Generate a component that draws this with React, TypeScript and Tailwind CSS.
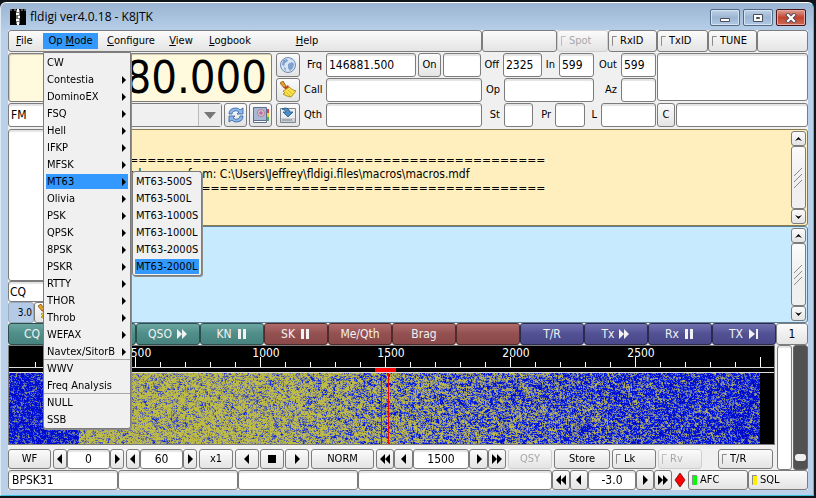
import { ReactNode, useEffect, useRef } from "react";
import clsx from "clsx";

const menuItems = [
    "CW", "Contestia", "DominoEX", "FSQ", "Hell", "IFKP", "MFSK", "MT63", "Olivia", "PSK", "QPSK",
    "8PSK", "PSKR", "RTTY", "THOR", "Throb", "WEFAX", "Navtex/SitorB", "WWV", "Freq Analysis", "NULL", "SSB",
];
const leafItems = ["CW", "WWV", "Freq Analysis", "NULL", "SSB"];
const subItems = ["MT63-500S", "MT63-500L", "MT63-1000S", "MT63-1000L", "MT63-2000S", "MT63-2000L"];

const face = "rounded-[3px] border border-[#7c7c7c] bg-linear-to-b from-[#fbfbfb] via-[#efefef] to-[#e4e4e4]";
const field = "min-w-0 rounded-[3px] border border-[#7c7c7c] bg-white shadow-[inset_0_2px_1px_#e4e4e4] outline-none";

const glyphs = {
    left: "M8 1v10L3 6z",
    right: "M4 1v10l5-5z",
    first: "M6 1v10L1 6zM11 1v10L6 6z",
    last: "M1 1v10l5-5zM6 1v10l5-5z",
    stop: "M2 2h8v8H2z",
    fast: "M1 1v10l5-5zM6 1v10l5-5z",
    pause: "M2 1h3v10H2zM7 1h3v10H7z",
    end: "M2 1v10l6-5zM9 1h2v10H9z",
};

type GlyphName = keyof typeof glyphs;

const Glyph = ({ name, className }: { name: GlyphName; className?: string }) => (
    <svg viewBox="0 0 12 12" className={clsx("size-3 shrink-0 fill-current", className)} aria-hidden="true">
        <path d={glyphs[name]} />
    </svg>
);

interface ButtonProps {
    children?: ReactNode;
    className?: string;
    label?: string;
    disabled?: boolean;
}

const Button = ({ children, className, label, disabled }: ButtonProps) => (
    <button
        type="button"
        aria-label={label}
        disabled={disabled}
        className={clsx(face, "flex shrink-0 items-center justify-center whitespace-nowrap", disabled && "border-[#cfcfcf] text-[#a8a8a8]", className)}
    >
        {children}
    </button>
);

interface LightButtonProps {
    text: string;
    className?: string;
    lamp?: string;
    disabled?: boolean;
}

const LightButton = ({ text, className, lamp, disabled }: LightButtonProps) => (
    <button
        type="button"
        disabled={disabled}
        className={clsx(face, "flex shrink-0 items-center gap-[3px] pl-[3px] whitespace-nowrap", disabled && "border-[#cfcfcf] text-[#a8a8a8]", className)}
    >
        <span className={clsx("h-[10px] w-[5px] rounded-[1px] border-t border-l border-[#8a8a8a]", lamp, disabled && "opacity-50")} />
        {text}
    </button>
);

const Field = ({ label, labelClass, className, value }: { label: string; labelClass: string; className: string; value?: string }) => (
    <label className="flex items-center">
        <span className={clsx("shrink-0 pr-1 text-right", labelClass)}>{label}</span>
        <input defaultValue={value} className={clsx(field, "h-6 px-[2px] text-[12px]", className)} />
    </label>
);

const Scrollbar = () => (
    <div className="flex w-[15px] shrink-0 flex-col">
        <Button label="Scroll up" className="h-[15px]">
            <svg viewBox="0 0 7 4" className="h-1 w-[7px]"><path d="M0 4L3.5 0 7 4 3.5 2.5z" /></svg>
        </Button>
        <div className={clsx(face, "flex flex-1 items-center justify-center from-[#f0f0f0] to-[#f0f0f0]")}>
            <svg viewBox="0 0 9 21" className="h-[21px] w-[9px] fill-none stroke-[#8a8a8a]">
                <path d="M0 9L8 1M0 15L8 7M0 21L8 13" />
            </svg>
        </div>
        <Button label="Scroll down" className="h-[15px]">
            <svg viewBox="0 0 7 4" className="h-1 w-[7px]"><path d="M0 0l3.5 4L7 0 3.5 1.5z" /></svg>
        </Button>
    </div>
);

const TitleBar = () => (
    <header className="flex h-[27px] items-center gap-1 pl-[2px]">
        <svg viewBox="0 0 16 16" className="size-4" aria-hidden="true">
            <path d="M0 0h16v16H0z" />
            <path d="M6 1h4v14H6z" fill="#777" />
            <path d="M7 0h2v3H7zM6 4h3v2H6zM8 7h2v2H8zM6 10h3v2H6zM7 13h2v3H7z" fill="#fff" />
            <path d="M0 1h2M4 1h2M11 1h2M14 1h2" stroke="#aaa" />
        </svg>
        <h1 className="flex-1 font-['Open_Sans',sans-serif] text-[12px]">fldigi ver4.0.18 - K8JTK</h1>
        <div className="flex gap-[3px] pt-[2px] pr-[2px]">
            <button type="button" aria-label="Minimize" className="flex h-[17px] w-[30px] items-center justify-center rounded-[2px] border border-[#536a85] bg-linear-to-b from-[#bfd2e7] via-[#9bb5d3] to-[#b1cae4] shadow-[inset_0_0_0_1px_#d5e3f2]">
                <svg viewBox="0 0 12 10" className="h-[10px] w-3"><path d="M1.5 5.5h9v3h-9z" fill="#fff" stroke="#4c4d5b" /></svg>
            </button>
            <button type="button" aria-label="Maximize" className="flex h-[17px] w-[30px] items-center justify-center rounded-[2px] border border-[#536a85] bg-linear-to-b from-[#bfd2e7] via-[#9bb5d3] to-[#b1cae4] shadow-[inset_0_0_0_1px_#d5e3f2]">
                <svg viewBox="0 0 12 10" className="h-[10px] w-3">
                    <path d="M1.5 1.5h9v7h-9z" fill="#fff" stroke="#4c4d5b" />
                    <path d="M4.5 4.5h3v1h-3z" fill="#9bb5d3" stroke="#4c4d5b" />
                </svg>
            </button>
            <button type="button" aria-label="Close" className="flex h-[17px] w-[30px] items-center justify-center rounded-[2px] border border-[#4b1519] bg-linear-to-b from-[#dd9d92] via-[#c2432e] to-[#cc6a55] shadow-[inset_0_0_0_1px_#e2aaa0]">
                <svg viewBox="0 0 12 10" className="h-[10px] w-3">
                    <path d="M3 2l6 6M9 2L3 8" stroke="#514a58" strokeWidth="4" strokeLinecap="square" />
                    <path d="M3 2l6 6M9 2L3 8" stroke="#fff" strokeWidth="2.2" strokeLinecap="square" />
                </svg>
            </button>
        </div>
    </header>
);

const OpModeMenu = () => (
    <div role="menu" className="absolute top-[19px] left-0 z-10 w-[88px] rounded-b-[3px] border border-[#7c7c7c] bg-[#f0f0f0] pt-px shadow-[1px_1px_0_#8c8c8c]">
        {menuItems.map((item) => (
            <div
                key={item}
                className={clsx("relative px-[2px]", (item === "WWV" || item === "NULL") && "shadow-[0_-1px_0_#a8a8a8]")}
            >
                <button
                    type="button"
                    role="menuitem"
                    className={clsx("flex h-[17px] w-full items-center justify-between border-y border-transparent bg-clip-padding pr-[2px] pl-px whitespace-nowrap", item === "MT63" && "bg-[#3399ff]")}
                >
                    {item}
                    {!leafItems.includes(item) && (
                        <svg viewBox="0 0 4 8" className="h-2 w-1"><path d="M0 0v8l4-4z" /></svg>
                    )}
                </button>
                {item === "MT63" && (
                    <div role="menu" className="absolute -top-[2px] left-[88px] w-[70px] rounded-[3px] border border-[#7c7c7c] bg-[#f0f0f0] px-[2px] pt-px shadow-[1px_1px_0_#8c8c8c]">
                        {subItems.map((sub) => (
                            <button
                                key={sub}
                                type="button"
                                role="menuitem"
                                className={clsx("flex h-[17px] w-full items-center border-y border-transparent bg-clip-padding pl-px whitespace-nowrap", sub === "MT63-2000L" && "bg-[#3399ff]")}
                            >
                                {sub}
                            </button>
                        ))}
                    </div>
                )}
            </div>
        ))}
    </div>
);

const MenuBar = () => (
    <div className="flex h-[22px]">
        <nav className={clsx(face, "flex flex-1 items-center pl-[7px]")}>
            <button type="button" className="w-[27px] text-left"><u>F</u>ile</button>
            <div className="relative">
                <button type="button" className="h-4 w-[55px] bg-[#3399ff] whitespace-nowrap">Op <u>M</u>ode</button>
                <OpModeMenu />
            </div>
            <button type="button" className="w-16 pl-[9px] text-left"><u>C</u>onfigure</button>
            <button type="button" className="w-[38px] text-center"><u>V</u>iew</button>
            <button type="button" className="w-[60px] text-center"><u>L</u>ogbook</button>
            <button type="button" className="ml-6 w-[46px] text-center"><u>H</u>elp</button>
        </nav>
        <Button label="Status" className="w-[75px]" />
        <LightButton text="Spot" disabled className="w-[51px]" />
        <LightButton text="RxID" className="w-[49px]" />
        <LightButton text="TxID" className="w-[51px]" />
        <LightButton text="TUNE" className="w-[49px]" />
        <Button label="Alert" className="w-[51px]" />
    </div>
);

const GlobeIcon = () => (
    <svg viewBox="0 0 18 18" className="size-[18px]">
        <circle cx="9" cy="9" r="7.5" fill="#d7e4f3" stroke="#6c8ab5" />
        <path d="M4 4l4-1 1 2-3 2-1 3-2-1zM9 8l4-2 2 2-1 4-3 3-2-3z" fill="#7da0cd" />
        <path d="M5 11l2 1v3l-2-2zM11 2l2 1-1 1z" fill="#8fb0d8" />
    </svg>
);

const BroomIcon = () => (
    <svg viewBox="0 0 18 18" className="size-[18px]">
        <path d="M1 2l3-2 3 5-2 2z" fill="#e3a02a" stroke="#8a5512" strokeWidth=".8" />
        <path d="M5 7l4-3 1 2-3 3z" fill="#c33f1e" />
        <path d="M6 9l4-3q3 3 7 4l-5 6q-6-1-8-3l2-1-2-2z" fill="#f8e04a" stroke="#a98a16" strokeWidth=".9" />
        <path d="M9 9l4 4M7 11l4 4" stroke="#d4b122" strokeWidth=".8" />
    </svg>
);

const SaveIcon = () => (
    <svg viewBox="0 0 18 18" className="size-[18px]">
        <path d="M1.5 2.5h15v14h-15z" fill="#eceff2" stroke="#7a8590" />
        <path d="M2 12h14v4H2z" fill="#c9ced3" />
        <path d="M4 13v2M6 13v2M8 13v2M10 13v2M12 13v2" stroke="#888" />
        <path d="M3 3q6-3 8 3h3l-5 5-5-5h3q0-2-4-3z" fill="#4c8cc4" stroke="#1f5487" strokeWidth=".8" />
    </svg>
);

const SyncIcon = () => (
    <svg viewBox="0 0 18 18" className="size-[18px]" fill="#8fb8ea" stroke="#2c5e9e" strokeWidth=".8">
        <path d="M2 8q0-6 7-6 3 0 4 2l3-2v6h-6l2-2q-2-2-5-1-2 1-2 3z" />
        <path d="M16 10q0 6-7 6-3 0-4-2l-3 2v-6h6l-2 2q2 2 5 1 2-1 2-3z" />
    </svg>
);

const BookIcon = () => (
    <svg viewBox="0 0 18 18" className="size-[18px]">
        <path d="M14 3h3v4h-3z" fill="#e04040" />
        <path d="M14 7h3v4h-3z" fill="#f0d030" />
        <path d="M14 11h3v4h-3z" fill="#4db04d" />
        <path d="M1.5 1.5h13v14h-13z" fill="#a9b8d2" stroke="#5e6f8d" />
        <path d="M1.5 14.5h13v2h-13z" fill="#fff" stroke="#5e6f8d" />
        <circle cx="9" cy="7" r="3.5" fill="#d9c4d8" stroke="#b08098" />
        <circle cx="9" cy="7" r="1.2" fill="none" stroke="#b04070" />
    </svg>
);

const RigPanel = () => (
    <section className="flex gap-1 pt-px pb-[2px]">
        <div className="flex w-[264px] shrink-0 flex-col gap-px">
            <div className="flex h-[49px] items-center justify-end overflow-hidden rounded-[3px] border border-[#7c7c7c] bg-[#fffade] pr-1 text-[45px] leading-[47px] shadow-[inset_1px_1px_1px_#cfcbb4]">
                880.000
            </div>
            <div className="flex h-6 gap-[2px]">
                <div className={clsx(field, "flex flex-1 items-center")}>
                    <input aria-label="Mode" defaultValue="FM" className="w-9 pl-[2px] text-[12px] outline-none" />
                    <span className="h-full flex-1 bg-[#f0f0f0]" />
                    <button type="button" aria-label="Choose bandwidth" className="flex h-full w-[23px] items-center justify-center border-l border-[#bbb] bg-[#ececec]">
                        <svg viewBox="0 0 12 7" className="h-[7px] w-3"><path d="M0 0h12L6 7z" fill="#777" /></svg>
                    </button>
                </div>
                <Button label="Refresh" className="w-[23px]"><SyncIcon /></Button>
                <Button label="Logbook entry" className="w-[23px]"><BookIcon /></Button>
            </div>
        </div>
        <div className="flex w-6 shrink-0 flex-col gap-px">
            <Button label="Web lookup" className="h-6"><GlobeIcon /></Button>
            <Button label="Clear" className="h-6"><BroomIcon /></Button>
            <Button label="Save" className="h-6"><SaveIcon /></Button>
        </div>
        <div className="flex w-[352px] shrink-0 flex-col gap-px">
            <div className="flex h-6">
                <Field label="Frq" labelClass="w-[22px]" className="w-[90px]" value="146881.500" />
                <Button className="mx-[2px] w-[23px]">On</Button>
                <input aria-label="Time on" className={clsx(field, "w-[39px]")} />
                <Field label="Off" labelClass="w-[22px]" className="w-[39px]" value="2325" />
                <Field label="In" labelClass="w-[17px]" className="w-[35px]" value="599" />
                <Field label="Out" labelClass="w-[27px]" className="w-[35px]" value="599" />
            </div>
            <div className="flex h-6">
                <Field label="Call" labelClass="w-[22px]" className="w-[156px]" />
                <Field label="Op" labelClass="w-[22px]" className="w-[90px]" />
                <Field label="Az" labelClass="w-[27px]" className="w-[35px]" />
            </div>
            <div className="flex h-6">
                <Field label="Qth" labelClass="w-[22px]" className="w-[156px]" />
                <Field label="St" labelClass="w-[22px]" className="w-[29px]" />
                <Field label="Pr" labelClass="w-[22px]" className="w-[30px]" />
                <Field label="L" labelClass="w-[16px]" className="w-[55px]" />
            </div>
        </div>
        <div className="-ml-[3px] flex min-w-0 flex-1 flex-col gap-[2px]">
            <textarea aria-label="Notes" className={clsx(field, "h-12 w-full resize-none")} />
            <div className="flex h-6 gap-px">
                <Button className="w-[18px]">C</Button>
                <input aria-label="Country" className={clsx(field, "flex-1")} />
            </div>
        </div>
    </section>
);

const TextPanes = () => (
    <section className="flex h-[194px]">
        <div className="flex w-[88px] shrink-0 flex-col">
            <div className={clsx(field, "h-[152px]")} />
            <input aria-label="Search" defaultValue="CQ" className={clsx(field, "h-[21px] px-px text-[12px]")} />
            <div className="flex h-[21px]">
                <span className="flex w-[26px] items-center justify-end rounded-[3px] border border-[#9ab] bg-[#b4cbe8] pr-px text-[10px]">3.0</span>
                <Button label="Clear browser" className="w-[23px]"><BroomIcon /></Button>
            </div>
        </div>
        <div className="flex min-w-0 flex-1 flex-col">
            <div className="flex h-[97px] rounded-[3px] border border-[#8a7a50] bg-[#ffefbf] p-px">
                <pre className="min-w-0 flex-1 overflow-hidden pt-[22px] pl-1 font-[DejaVu_Sans_Condensed,sans-serif] text-[12px] leading-[14px]">
                    {"=".repeat(49) + "\nLoaded macros from: C:\\Users\\Jeffrey\\fldigi.files\\macros\\macros.mdf\n" + "=".repeat(49)}
                </pre>
                <Scrollbar />
            </div>
            <div className="flex h-[97px] rounded-[3px] border border-[#5f7f98] bg-[#c8eaff] p-px">
                <textarea aria-label="Transmit text" className="flex-1 resize-none outline-none" />
                <Scrollbar />
            </div>
        </div>
    </section>
);

const teal = "bg-linear-to-b from-[#6aa5a1] via-[#4f8d89] to-[#478480] border-[#2b4f4d]";
const maroon = "bg-linear-to-b from-[#b06b6b] via-[#935050] to-[#8b4949] border-[#4f2b2b]";
const navy = "bg-linear-to-b from-[#7070b0] via-[#505093] to-[#49498b] border-[#2b2b4f]";

const macros: { text: string; tone: string; glyph?: GlyphName }[] = [
    { text: "CQ", tone: teal, glyph: "fast" },
    { text: "", tone: teal },
    { text: "QSO", tone: teal, glyph: "fast" },
    { text: "KN", tone: teal, glyph: "pause" },
    { text: "SK", tone: maroon, glyph: "pause" },
    { text: "Me/Qth", tone: maroon },
    { text: "Brag", tone: maroon },
    { text: "", tone: maroon },
    { text: "T/R", tone: navy },
    { text: "Tx", tone: navy, glyph: "fast" },
    { text: "Rx", tone: navy, glyph: "pause" },
    { text: "TX", tone: navy, glyph: "end" },
];

const MacroBar = () => (
    <div className="flex h-[22px]">
        {macros.map((macro, i) => (
            <button
                key={i}
                type="button"
                aria-label={macro.text || "Empty macro"}
                className={clsx("flex min-w-0 flex-1 items-center justify-center gap-1 rounded-[3px] border text-[12px] text-[#f2f2f2]", macro.tone)}
            >
                {macro.text}
                {macro.glyph && <Glyph name={macro.glyph} />}
            </button>
        ))}
        <Button className="w-8 text-[12px]">1</Button>
    </div>
);

// signal level over the passband, 0 is noise floor and 1 is full
const level = (x: number, y: number) => {
    if (x < 50) return 0.14;
    const edge = 76 - y / 10;
    if (x < edge) return 0.2;
    if (x < 240) return 0.82;
    if (x < 400) return 0.82 - ((x - 240) / 160) * 0.24;
    return Math.max(0.2, 0.58 - ((x - 400) / 350) * 0.36);
};

const palette = [[0, 10, 200], [0, 28, 240], [75, 90, 185], [125, 130, 135], [175, 172, 90], [192, 190, 66]];

const Waterfall = () => {
    const ref = useRef<HTMLCanvasElement>(null);

    useEffect(() => {
        const canvas = ref.current;
        const ctx = canvas?.getContext("2d");
        if (!canvas || !ctx) return;
        const { width, height } = canvas;
        const image = ctx.createImageData(width, height);
        let seed = 7321;
        const random = () => {
            seed = (seed * 1664525 + 1013904223) >>> 0;
            return seed / 4294967296;
        };
        const above = Array.from({ length: width }, random);
        for (let y = 0; y < height; y++) {
            let previous = random();
            for (let x = 0; x < width; x++) {
                // neighbours share part of their noise so the grain spans about two pixels
                const next = random() * 0.5 + previous * 0.3 + above[x] * 0.2;
                previous = next;
                above[x] = next;
                const v = Math.min(0.999, Math.max(0, level(x, y) + (next - 0.5) * 1.7)) * (palette.length - 1);
                const low = palette[Math.floor(v)];
                const high = palette[Math.floor(v) + 1];
                const k = v - Math.floor(v);
                const at = (y * width + x) * 4;
                for (let c = 0; c < 3; c++) image.data[at + c] = low[c] + (high[c] - low[c]) * k;
                image.data[at + 3] = 255;
            }
        }
        ctx.putImageData(image, 0, 0);
        ctx.fillStyle = "#ff0000";
        ctx.fillRect(372, 0, 1, height);
        ctx.fillRect(379, 0, 1, height);
    }, []);

    return <canvas ref={ref} width={751} height={71} className="h-[71px] w-full min-w-0 flex-1 [image-rendering:pixelated]" />;
};

const Scale = () => (
    <svg className="block h-[27px] w-full text-[12px]" fill="#fff">
        {Array.from({ length: 30 }, (_, i) => i + 1).map((i) => (
            <rect key={i} x={i * 25 + 1} y={i % 5 ? 16 : 11} width="1" height={i % 5 ? 5 : 10} />
        ))}
        {[500, 1000, 1500, 2000, 2500].map((hz) => (
            <text key={hz} x={hz / 4 + 7} y="11" textAnchor="middle">{hz}</text>
        ))}
        <rect y="21" width="100%" height="1" fill="#ddd" />
        <rect y="26" width="100%" height="1" fill="#ddd" />
        <rect x="366" y="22" width="21" height="4" fill="#f00" />
    </svg>
);

const ControlRow = () => (
    <div className="flex h-5 gap-[2px]">
        <Button className="w-[43px]">WF</Button>
        <div className="flex">
            <Button label="Lower level" className="w-[14px]"><Glyph name="left" /></Button>
            <input aria-label="Level" defaultValue="0" className={clsx(field, "w-[43px] text-center text-[12px]")} />
            <Button label="Raise level" className="w-[14px]"><Glyph name="right" /></Button>
        </div>
        <div className="flex">
            <Button label="Lower range" className="w-[14px]"><Glyph name="left" /></Button>
            <input aria-label="Range" defaultValue="60" className={clsx(field, "w-[43px] text-center text-[12px]")} />
            <Button label="Raise range" className="w-[14px]"><Glyph name="right" /></Button>
        </div>
        <Button className="w-[34px]">x1</Button>
        <div className="flex gap-px">
            <Button label="Move left" className="w-6"><Glyph name="left" /></Button>
            <Button label="Center" className="w-6"><Glyph name="stop" /></Button>
            <Button label="Move right" className="w-6"><Glyph name="right" /></Button>
        </div>
        <Button className="w-[63px]">NORM</Button>
        <div className="flex">
            <Button label="Fast down" className="w-[18px]"><Glyph name="first" /></Button>
            <Button label="Down" className="w-[19px]"><Glyph name="left" /></Button>
            <input aria-label="Carrier" defaultValue="1500" className={clsx(field, "w-[56px] text-center text-[12px]")} />
            <Button label="Up" className="w-[19px]"><Glyph name="right" /></Button>
            <Button label="Fast up" className="w-[18px]"><Glyph name="last" /></Button>
        </div>
        <Button disabled className="w-[44px]">QSY</Button>
        <Button className="w-[56px]">Store</Button>
        <LightButton text="Lk" className="w-[44px]" />
        <LightButton text="Rv" disabled className="w-[44px]" />
        <LightButton text="T/R" className="mr-[2px] ml-auto w-[55px]" />
    </div>
);

const StatusRow = () => (
    <footer className="flex h-5">
        <div className={clsx(field, "flex w-[110px] items-center pl-[3px] text-[12px]")}>BPSK31</div>
        <div className={clsx(field, "w-[120px]")} />
        <div className={clsx(field, "w-[120px]")} />
        <div className={clsx(field, "flex-1")} />
        <Button label="Fast lower squelch" className="w-[18px]"><Glyph name="first" /></Button>
        <Button label="Lower squelch" className="w-[18px]"><Glyph name="left" /></Button>
        <input aria-label="Squelch" defaultValue="-3.0" className={clsx(field, "w-[48px] text-center text-[12px]")} />
        <Button label="Raise squelch" className="w-[18px]"><Glyph name="right" /></Button>
        <Button label="Fast raise squelch" className="w-[18px]"><Glyph name="last" /></Button>
        <svg viewBox="0 0 16 20" className="h-5 w-4 shrink-0"><path d="M8 3l5 7-5 7-5-7z" fill="#f00" stroke="#500" strokeWidth=".7" /></svg>
        <LightButton text="AFC" lamp="bg-[#00ff00]" className="w-[60px]" />
        <LightButton text="SQL" lamp="bg-[#ffee00]" className="w-[60px]" />
    </footer>
);

export default function App() {
    return (
        <div className="bg-[#10151c] pt-[2px] pr-[2px] pb-[3px] font-[DejaVu_Sans_Condensed,sans-serif] text-[11px] leading-[14px] text-black">
            <div className="rounded-t-[6px] border border-[#35c4dc] border-t-white border-l-[#dfeaf5] bg-linear-to-b from-[#9ab4d2] via-[#b9d1ea] via-[30px] to-[#b9d1ea] pr-[5px] pb-[5px] pl-[7px]">
                <TitleBar />
                <main className="bg-[#f0f0f0]">
                    <MenuBar />
                    <RigPanel />
                    <TextPanes />
                    <MacroBar />
                    <div className="flex">
                        <div className="flex min-w-0 flex-1 flex-col gap-1 pb-px">
                            <div className="border border-[#7c7c7c] bg-black">
                                <Scale />
                                <div className="flex">
                                    <Waterfall />
                                    <span className="w-[14px] shrink-0 bg-black" />
                                </div>
                            </div>
                            <ControlRow />
                        </div>
                        <div className="flex w-[33px] shrink-0 gap-px pl-[2px]">
                            <div className={clsx(field, "w-[15px]")} />
                            <label className="relative w-[15px] rounded-[3px] border border-[#666] bg-[#515151]">
                                <input type="range" aria-label="Squelch level" className="absolute inset-0 size-full appearance-none opacity-0 [writing-mode:vertical-lr]" />
                                <span className="absolute bottom-2 left-px h-[7px] w-[11px] rounded-[3px] bg-[#efefef]" />
                            </label>
                        </div>
                    </div>
                    <StatusRow />
                </main>
            </div>
        </div>
    );
}
